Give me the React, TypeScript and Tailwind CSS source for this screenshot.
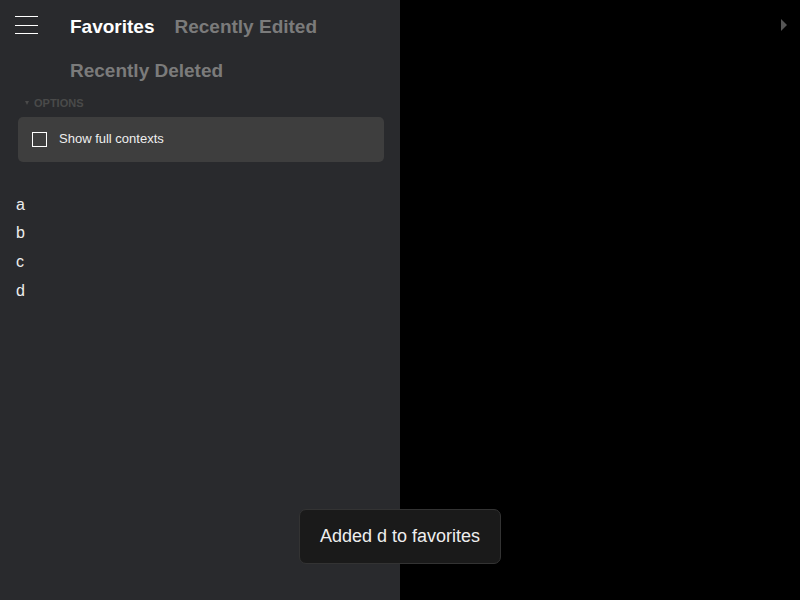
import React from "react";

export default function App() {
  return (
    <div className="relative flex h-[600px] w-[800px] overflow-hidden bg-black font-['Liberation_Sans',Arial,sans-serif]">
      <div className="flex h-full w-[400px] flex-col bg-[#292a2d]">
        <div className="flex items-start">
          <div className="flex h-[52px] w-[70px] shrink-0 flex-col gap-[7.5px] pl-[15px] pt-[16px]">
            <div className="h-[1px] w-[23px] bg-white" />
            <div className="h-[1px] w-[23px] bg-white" />
            <div className="h-[1px] w-[23px] bg-white" />
          </div>
          <div className="flex flex-wrap gap-x-[20px] pt-[15px] text-[19px] font-bold leading-[24px]">
            <span className="text-white">Favorites</span>
            <span className="text-[#7b7b7b]">Recently Edited</span>
            <span className="mt-[20px] text-[#7b7b7b]">Recently Deleted</span>
          </div>
        </div>
        <div className="mt-[12px] flex items-center pl-[25px] text-[11px] font-bold text-[#4a4a4a]">
          <div className="mr-[5px] h-0 w-0 border-x-[2.5px] border-t-[4px] border-x-transparent border-t-[#4a4a4a]" />
          <span>OPTIONS</span>
        </div>
        <div className="ml-[18px] mr-[16px] mt-[5px] flex h-[45px] items-center rounded-[5px] bg-[#3e3e3e] pl-[14px]">
          <div className="h-[15px] w-[15px] border border-white" />
          <span className="ml-[12px] text-[13px] text-[#eeeeee]">Show full contexts</span>
        </div>
        <div className="mt-[29px] flex flex-col pl-[16px] text-[16px] leading-[28.7px] text-[#eeeeee]">
          <span>a</span>
          <span>b</span>
          <span>c</span>
          <span>d</span>
        </div>
      </div>
      <div className="flex flex-1 justify-end pr-[13px] pt-[19px]">
        <div className="h-0 w-0 border-y-[6.5px] border-l-[6px] border-y-transparent border-l-[#555555]" />
      </div>
      <div className="absolute left-[299px] top-[509px] flex h-[55px] w-[202px] items-center rounded-[7px] border border-[#333333] bg-[#1a1a1a] pl-[20px] text-[18px] text-[#eeeeee]">
        Added d to favorites
      </div>
    </div>
  );
}
